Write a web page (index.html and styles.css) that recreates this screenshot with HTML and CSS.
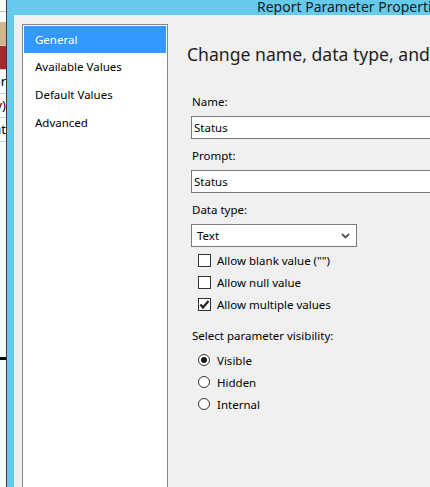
FILE: index.html
```html
<!DOCTYPE html>
<html lang="en">
<head>
    <meta charset="UTF-8">
    <title>Report Parameter Properties</title>
    <link rel="stylesheet" href="styles.css">
</head>
<body>
    <div class="backdrop">
        <div class="row row-top"></div>
        <div class="row row-tan"></div>
        <div class="row row-red"></div>
        <div class="row"><span>or</span></div>
        <div class="row"><span>y)</span></div>
        <div class="row"><span>nt</span></div>
        <div class="row row-empty"></div>
    </div>

    <div class="dialog">
        <div class="titlebar">
            <span class="title">Report Parameter Properties</span>
        </div>

        <div class="dialog-body">
            <ul class="nav">
                <li class="active">General</li>
                <li>Available Values</li>
                <li>Default Values</li>
                <li>Advanced</li>
            </ul>

            <div class="main">
                <h2>Change name, data type, and other options.</h2>

                <div class="field">
                    <label for="name">Name:</label>
                    <input type="text" id="name" value="Status">
                </div>
                <div class="field">
                    <label for="prompt">Prompt:</label>
                    <input type="text" id="prompt" value="Status">
                </div>
                <div class="field field-type">
                    <label>Data type:</label>
                    <div class="select">
                        <span>Text</span>
                        <svg width="9" height="6" viewBox="0 0 9 6"><path d="M1 1 L4.5 4.5 L8 1" fill="none" stroke="#555" stroke-width="1.8"/></svg>
                    </div>
                </div>

                <div class="options">
                    <div class="check"><span class="box"></span>Allow blank value ("")</div>
                    <div class="check"><span class="box"></span>Allow null value</div>
                    <div class="check"><span class="box"><svg width="11" height="11" viewBox="0 0 11 11"><path d="M1.5 5.5 L4 8.5 L9.5 2" fill="none" stroke="#222" stroke-width="2.2"/></svg></span>Allow multiple values</div>
                </div>

                <div class="visibility">
                    <label>Select parameter visibility:</label>
                    <div class="radio"><span class="dot on"></span>Visible</div>
                    <div class="radio"><span class="dot"></span>Hidden</div>
                    <div class="radio"><span class="dot"></span>Internal</div>
                </div>
            </div>
        </div>
    </div>
</body>
</html>
```

FILE: styles.css
```css
*{
    margin: 0;
    padding: 0;
    box-sizing: border-box;
}

body{
    width: 430px;
    height: 487px;
    overflow: hidden;
    display: flex;
    font-family: "Noto Sans", "Open Sans", sans-serif;
    font-size: 11.5px;
    color: #000;
    background: #fff;
}

/* window behind the dialog */
.backdrop{
    width: 7px;
    flex-shrink: 0;
    border-right: 1px solid #3a3a3a;
    display: flex;
    flex-direction: column;
    overflow: hidden;
}
.row{
    height: 24px;
    flex-shrink: 0;
    border-bottom: 1px solid #d0d0d0;
    font-size: 13px;
    line-height: 22px;
    white-space: nowrap;
    display: flex;
    justify-content: flex-end;
}
.row-top{
    height: 22px;
    border-bottom: none;
    background: linear-gradient(#fff 11px, #bcbcbc 11px, #bcbcbc 12px, #fff 12px);
}
.row-tan{
    background: #d3b58d;
    border-bottom: 1px solid #c8c8c8;
}
.row-red{
    background: #a9282c;
    border-bottom: 1px solid #c8c8c8;
}
.row-empty{
    height: 218px;
    border-bottom: 3px solid #000;
}

.dialog{
    flex: 1;
    display: flex;
    flex-direction: column;
    background: #66cbea;
    padding-left: 7px;
}
.titlebar{
    height: 15px;
    overflow: hidden;
    padding-left: 243px;
    white-space: nowrap;
}
.title{
    display: inline-block;
    margin-top: -10px;
    font-size: 14px;
    line-height: 16px;
    color: #1b1b1b;
}

.dialog-body{
    flex: 1;
    display: flex;
    background: #f0f0f0;
    padding: 9px 0 0 8px;
    overflow: hidden;
}

.nav{
    list-style: none;
    width: 146px;
    flex-shrink: 0;
    background: #fff;
    border: 1px solid #828790;
    border-bottom: none;
    padding: 1px 1px 0;
}
.nav li{
    height: 28px;
    line-height: 28px;
    padding-left: 11px;
    white-space: nowrap;
}
.nav li.active{
    height: 27px;
    line-height: 27px;
    background: #3399ff;
    color: #fff;
}

.main{
    flex: 1;
    padding: 17px 0 0 19px;
    white-space: nowrap;
    min-width: 0;
}
h2{
    font-weight: normal;
    font-size: 17.6px;
    line-height: 26px;
    color: #1e1e1e;
    margin-bottom: 27px;
}
label{
    display: block;
    line-height: 16px;
    margin-left: 5px;
    margin-bottom: 6px;
}
.field{
    margin-bottom: 9px;
}
.field-type{
    margin-bottom: 2px;
}
input{
    display: block;
    width: 260px;
    height: 23px;
    margin-left: 4px;
    border: 1px solid #7a7a7a;
    background: #fff;
    padding: 0 2px;
    font: inherit;
    color: #000;
    outline: none;
}
.select{
    width: 166px;
    height: 23px;
    margin-left: 4px;
    border: 1px solid #7a7a7a;
    background: #fff;
    padding: 0 6px 0 5px;
    display: flex;
    align-items: center;
    justify-content: space-between;
}

.options{
    margin-left: 11px;
}
.check, .radio{
    height: 22px;
    display: flex;
    align-items: center;
    gap: 6px;
}
.box{
    width: 13px;
    height: 13px;
    border: 1px solid #333;
    background: #fff;
    display: flex;
    align-items: center;
    justify-content: center;
}

.visibility{
    margin-top: 13px;
}
.visibility label{
    margin-bottom: 5px;
}
.visibility .radio{
    margin-left: 11px;
}
.dot{
    width: 12px;
    height: 12px;
    border: 1px solid #333;
    border-radius: 50%;
    background: #fff;
    display: flex;
    align-items: center;
    justify-content: center;
    margin-right: 1px;
}
.dot.on::after{
    content: "";
    width: 6px;
    height: 6px;
    border-radius: 50%;
    background: #1a1a1a;
}
```
